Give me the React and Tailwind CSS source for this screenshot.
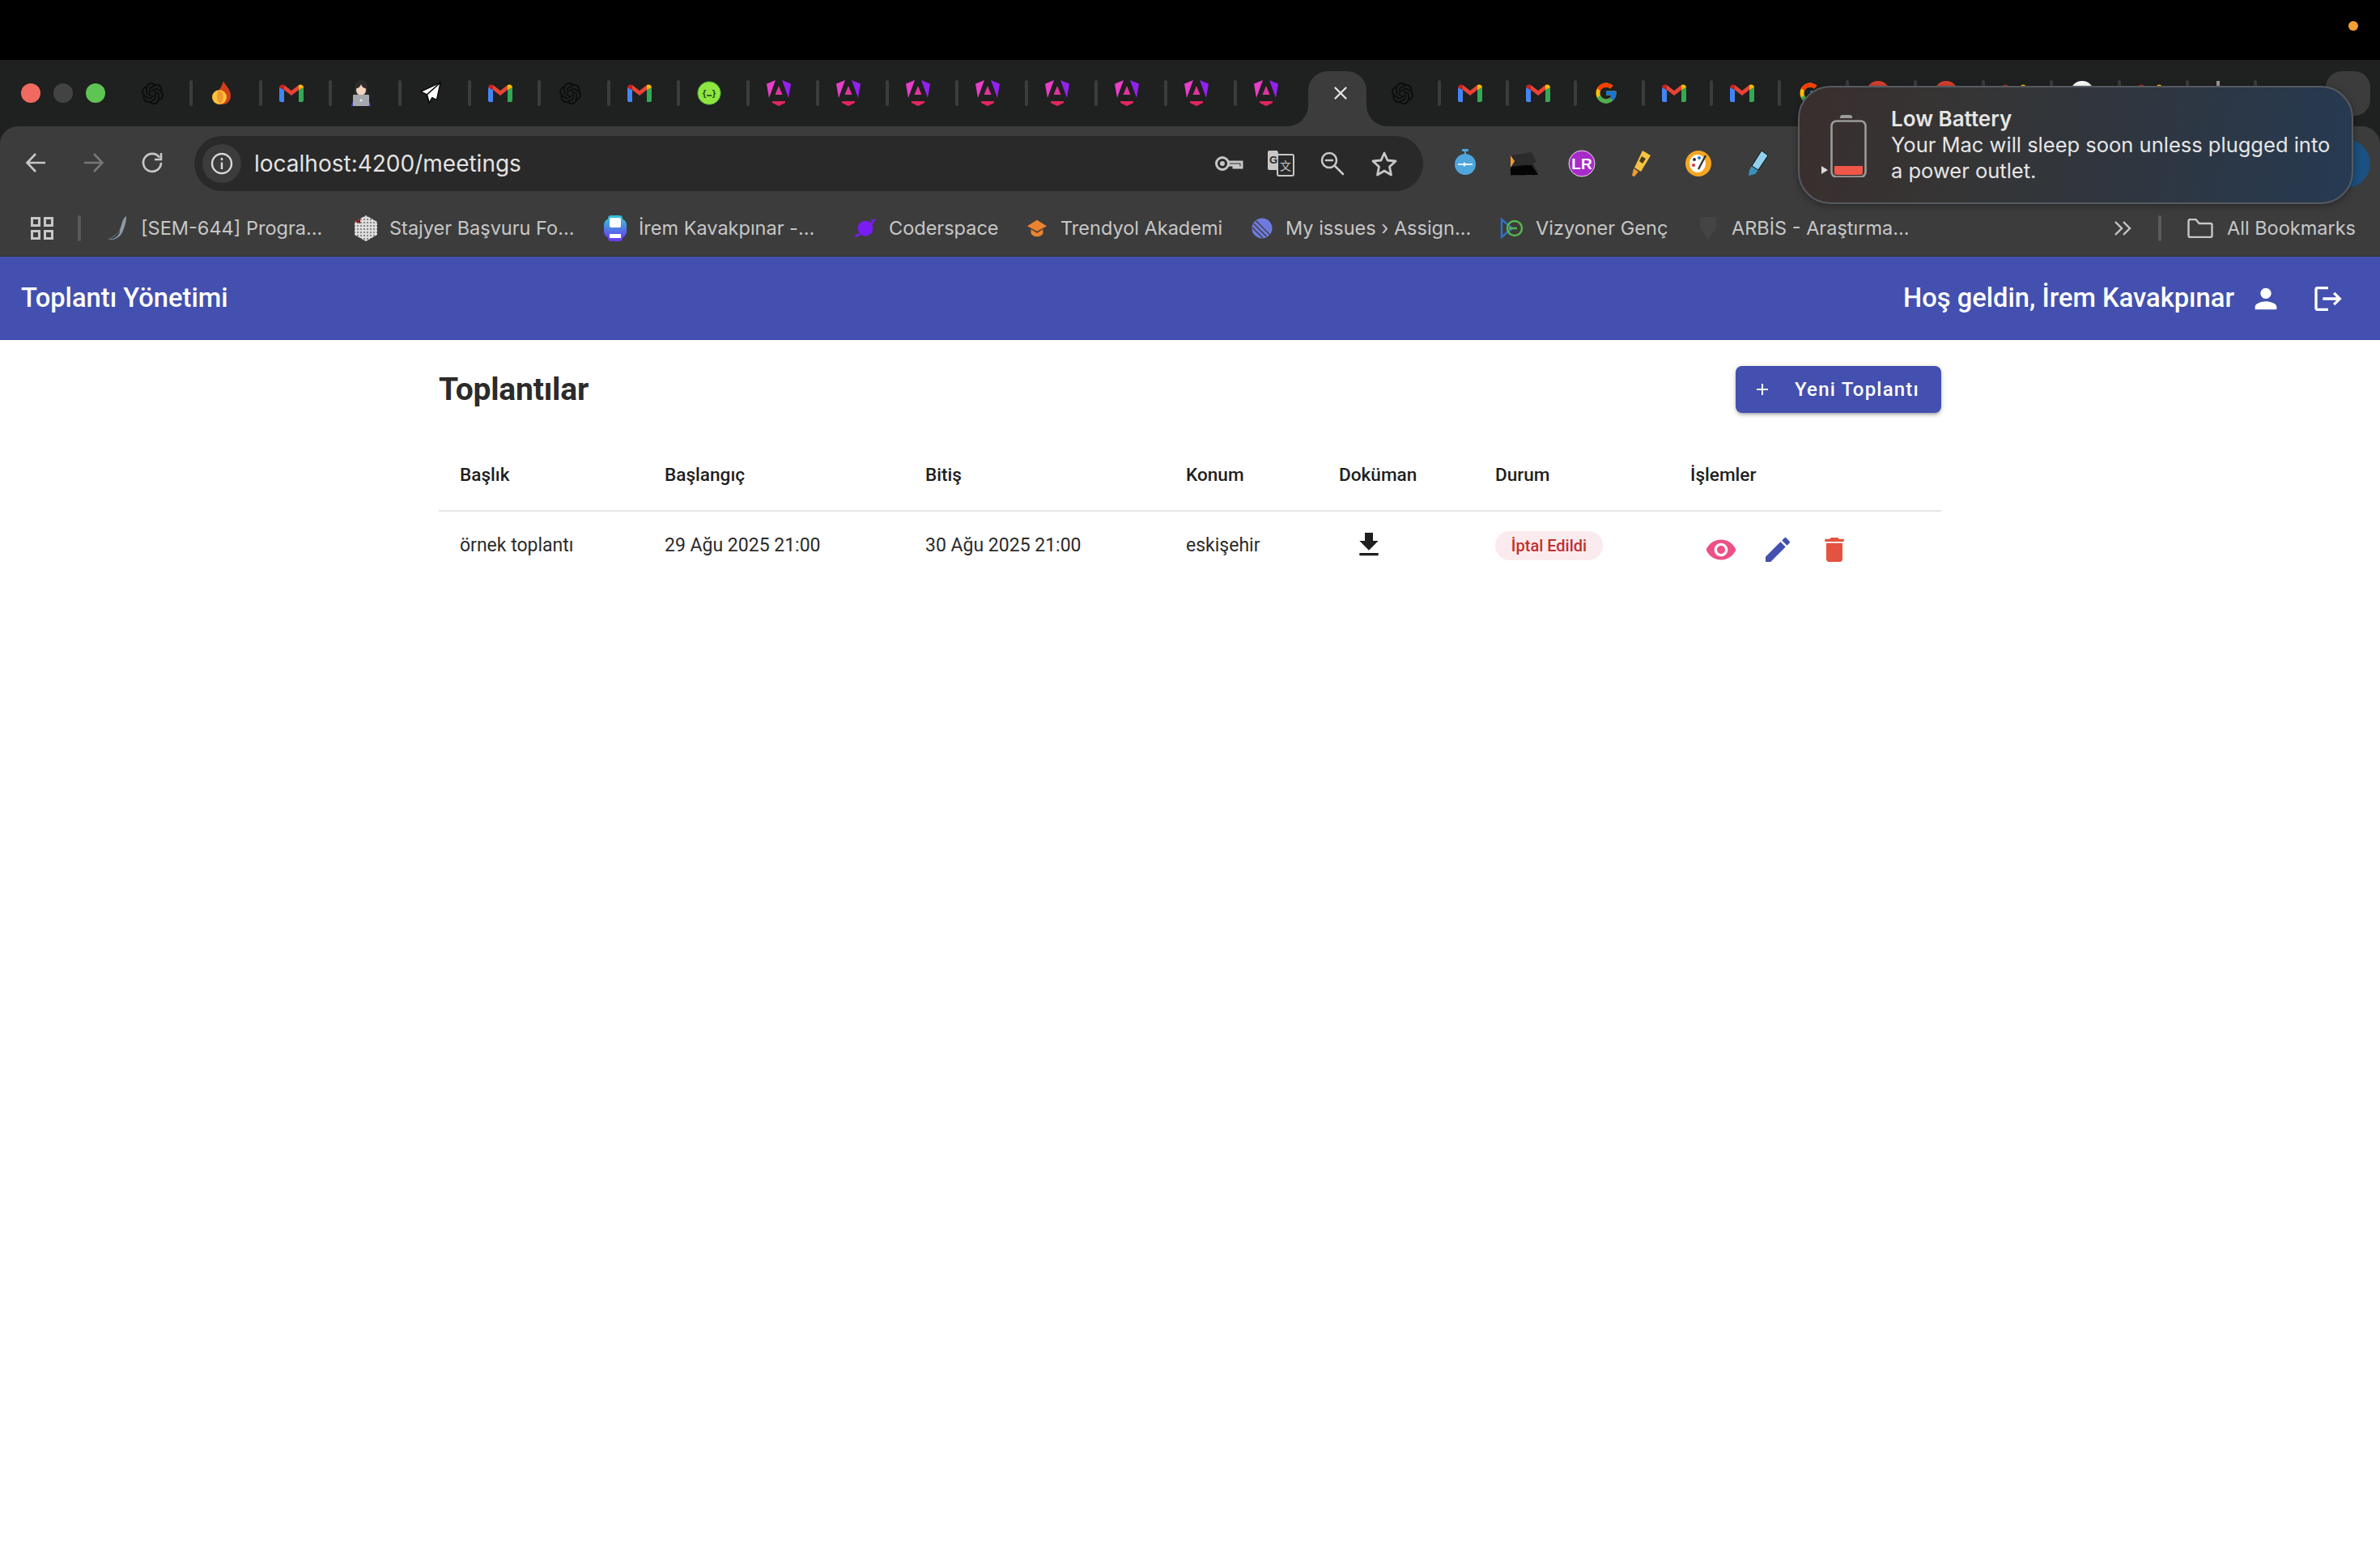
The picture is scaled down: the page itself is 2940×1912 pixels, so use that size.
import { SiOpenai } from "react-icons/si";
import { FcGoogle } from "react-icons/fc";

// material icon paths used by the meetings page
const ICONS = {
  visibility: "M12 4.5C7 4.5 2.73 7.61 1 12c1.73 4.39 6 7.5 11 7.5s9.27-3.11 11-7.5c-1.73-4.39-6-7.5-11-7.5zM12 17c-2.76 0-5-2.24-5-5s2.24-5 5-5 5 2.24 5 5-2.24 5-5 5zm0-8c-1.66 0-3 1.34-3 3s1.34 3 3 3 3-1.34 3-3-1.34-3-3-3z",
  edit: "M3 17.25V21h3.75L17.81 9.94l-3.75-3.75L3 17.25zM20.71 7.04c.39-.39.39-1.02 0-1.41l-2.34-2.34c-.39-.39-1.02-.39-1.41 0l-1.83 1.83 3.75 3.75 1.83-1.83z",
  trash: "M6 19c0 1.1.9 2 2 2h8c1.1 0 2-.9 2-2V7H6v12zM19 4h-3.5l-1-1h-5l-1 1H5v2h14V4z",
  download: "M19 9h-4V3H9v6H5l7 7 7-7zM5 18v2h14v-2H5z",
  person: "M12 12c2.21 0 4-1.79 4-4s-1.79-4-4-4-4 1.79-4 4 1.79 4 4 4zm0 2c-2.67 0-8 1.34-8 4v2h16v-2c0-2.66-5.33-4-8-4z",
  logout: "M17 7l-1.41 1.41L18.17 11H8v2h10.17l-2.58 2.58L17 17l5-5zM4 5h8V3H4c-1.1 0-2 .9-2 2v14c0 1.1.9 2 2 2h8v-2H4V5z",
  add: "M19 13h-6v6h-2v-6H5v-2h6V5h2v6h6v2z",
};

function Mat({ name, className }) {
  return (
    <svg viewBox="0 0 24 24" className={className} fill="currentColor">
      <path d={ICONS[name]} />
    </svg>
  );
}

// --- tab favicons ---
function Gmail() {
  return (
    <svg viewBox="0 0 30 22" className="w-[30px] h-[22px]">
      <path d="M0 4v16a2 2 0 0 0 2 2h4V7z" fill="#4285f4" />
      <path d="M30 4v16a2 2 0 0 1-2 2h-4V7z" fill="#34a853" />
      <path d="M6 7v-6l9 7 9-7v6l-9 7z" fill="#ea4335" />
      <path d="M0 4a4 4 0 0 1 6-3v6z" fill="#c5221f" />
      <path d="M30 4a4 4 0 0 0-6-3v6z" fill="#fbbc04" />
    </svg>
  );
}

function Angular() {
  return (
    <svg viewBox="0 0 30 32" className="w-[30px] h-[32px]">
      <path d="M11 0 0 4.5 3 22z" fill="#e83fc8" />
      <path d="M19 0 30 4.5 27 22z" fill="#9420ee" />
      <path d="M15 7 19.5 18h-9z" fill="#e0359b" />
      <path d="M7 26h16v2l-8 4-8-4z" fill="#e2265f" />
    </svg>
  );
}

function Gpt() {
  return <SiOpenai className="w-[27px] h-[27px] text-[#0b0b0b]" />;
}

function Flame() {
  return (
    <svg viewBox="0 0 24 30" className="w-[24px] h-[30px]">
      <path d="M14 0c2 5 9 10 9 18a10 10 0 0 1-20 2C6 14 12 8 14 0z" fill="#cf3f1c" />
      <circle cx="9" cy="20" r="9" fill="#f8c23c" />
      <path d="M9 11c3 2 5 5 5 9s-2 7-4 8c-3-2-4-5-4-9s1-6 3-8z" fill="#ef9a2e" />
    </svg>
  );
}

function Girl() {
  return (
    <svg viewBox="0 0 30 32" className="w-[30px] h-[32px]">
      <path d="M15 0c6 0 8 5 8 11v9H7v-9C7 5 9 0 15 0z" fill="#2b2b2b" />
      <ellipse cx="15" cy="12" rx="6" ry="7" fill="#f3d3c0" />
      <path d="M9 10c3 0 5-2 6-5 1 3 3 5 6 5V6l-6-3-6 3z" fill="#2b2b2b" />
      <path d="M3 32c0-6 5-9 12-9s12 3 12 9z" fill="#3a46b8" />
      <rect x="5" y="18" width="20" height="14" rx="1" fill="#a5a8ad" />
      <circle cx="15" cy="25" r="1.4" fill="#eee" />
    </svg>
  );
}

function Plane() {
  return (
    <svg viewBox="0 0 30 32" className="w-[28px] h-[30px]">
      <path d="M28 2 2 14l8 4 3 11 4-7 6 3z" fill="#fff" stroke="#0a0a0a" strokeWidth="1.6" strokeLinejoin="round" />
      <path d="M28 2 10 18l3 11" fill="none" stroke="#0a0a0a" strokeWidth="1.6" />
    </svg>
  );
}

function Swagger() {
  return (
    <svg viewBox="0 0 30 30" className="w-[30px] h-[30px]">
      <circle cx="15" cy="15" r="14.5" fill="#8ee63f" stroke="#1f5f33" />
      <text x="15" y="19" textAnchor="middle" fontSize="10" fontWeight="700" fill="#173d22" fontFamily="'DejaVu Sans Mono', monospace">{"{…}"}</text>
    </svg>
  );
}

function RedDisc() {
  return <div className="w-[30px] h-[30px] rounded-full bg-[#d9402f]" />;
}

function WhiteDisc() {
  return <div className="w-[30px] h-[30px] rounded-full bg-white" />;
}

function Tip() {
  return <div className="w-[4px] h-[30px] bg-[#9a9a9a]" />;
}

function FcG() {
  return <FcGoogle className="w-[32px] h-[32px]" />;
}

const LEFT_TABS = [Gpt, Flame, Gmail, Girl, Plane, Gmail, Gpt, Gmail, Swagger, Angular, Angular, Angular, Angular, Angular, Angular, Angular];
const RIGHT_TABS = [Gpt, Gmail, Gmail, FcG, Gmail, Gmail, FcG, RedDisc, RedDisc, Gmail, WhiteDisc, Gmail, Tip];

function Fav({ icon: Icon }) {
  return (
    <div className="w-[30px] h-[32px] flex items-center justify-center shrink-0">
      <Icon />
    </div>
  );
}

function TabStrip() {
  return (
    <div className="h-[82px] flex items-center pl-[26px] pr-[12px]">
      <div className="w-[24px] h-[24px] rounded-full bg-[#f16a60]" />
      <div className="w-[24px] h-[24px] rounded-full bg-[#434343] ml-[16px]" />
      <div className="w-[24px] h-[24px] rounded-full bg-[#5ec454] ml-[16px] mr-[43px]" />

      {LEFT_TABS.map((Icon, i) => (
        <div key={i} className="flex items-center">
          <Fav icon={Icon} />
          <div className="w-[4px] h-[32px] rounded-sm bg-[#3b3c3c] ml-[31px] mr-[21px]" />
        </div>
      ))}
      <Fav icon={Angular} />

      <div className="relative self-end ml-[37px] mr-[29px] w-[72px] h-[68px] rounded-t-[24px] bg-[#3c3c3c] flex items-center justify-center pb-[14px] pl-[8px] shrink-0">
        <div className="absolute bottom-0 -left-[26px] w-[26px] h-[26px] bg-[#3c3c3c]">
          <div className="w-full h-full rounded-br-[26px] bg-[#1f2020]" />
        </div>
        <div className="absolute bottom-0 -right-[26px] w-[26px] h-[26px] bg-[#3c3c3c]">
          <div className="w-full h-full rounded-bl-[26px] bg-[#1f2020]" />
        </div>
        <svg viewBox="0 0 16 16" className="w-[16px] h-[16px]" stroke="#e8e8e8" strokeWidth="2.2" strokeLinecap="round">
          <path d="M1.5 1.5l13 13M14.5 1.5l-13 13" />
        </svg>
      </div>

      {RIGHT_TABS.map((Icon, i) => (
        <div key={i} className="flex items-center">
          <Fav icon={Icon} />
          <div className="w-[4px] h-[32px] rounded-sm bg-[#3b3c3c] ml-[29px] mr-[21px]" />
        </div>
      ))}

      <div className="ml-auto w-[55px] h-[55px] rounded-[20px] bg-[#3c3c3c] self-center" />
    </div>
  );
}

// --- omnibox row ---
function AddressIcons() {
  return (
    <div className="flex items-center ml-auto pr-[16px] text-[#c7c7c7]">
      <div className="w-[64px] flex justify-center">
        <svg viewBox="0 0 36 24" className="w-[36px] h-[24px]" fill="none" stroke="currentColor" strokeWidth="3">
          <circle cx="10" cy="12" r="7.5" />
          <circle cx="10" cy="12" r="3" fill="currentColor" stroke="none" />
          <path d="M17 10h17v7h-4v-3h-3v3h-3v-3h-7" />
        </svg>
      </div>
      <div className="w-[64px] flex justify-center">
        <svg viewBox="0 0 34 34" className="w-[34px] h-[34px]">
          <path d="M1 3a2 2 0 0 1 2-2h10l8 24H3a2 2 0 0 1-2-2z" fill="#c7c7c7" />
          <rect x="13" y="6" width="20" height="26" rx="2" fill="#2a2a2a" stroke="#c7c7c7" strokeWidth="2" />
          <text x="8" y="17" textAnchor="middle" fontSize="13" fontWeight="700" fill="#2a2a2a" fontFamily="'Liberation Sans', sans-serif">G</text>
          <text x="23" y="25" textAnchor="middle" fontSize="14" fill="#c7c7c7" fontFamily="'Noto Sans CJK SC', sans-serif">文</text>
        </svg>
      </div>
      <div className="w-[64px] flex justify-center">
        <svg viewBox="0 0 30 30" className="w-[30px] h-[30px]" fill="none" stroke="currentColor" strokeWidth="2.6" strokeLinecap="round">
          <circle cx="11" cy="11" r="9" />
          <path d="M7 11h8M18 18l10 10" />
        </svg>
      </div>
      <div className="w-[64px] flex justify-center">
        <svg viewBox="0 0 32 32" className="w-[32px] h-[32px]" fill="none" stroke="currentColor" strokeWidth="2.8" strokeLinejoin="round">
          <path d="M16 3l4 9 10 1-7.500 7 2 10-8.500-5-8.500 5 2-10L2 13l10-1z" />
        </svg>
      </div>
    </div>
  );
}

function Extensions() {
  return (
    <div className="flex items-center h-[68px] ml-[28px] gap-[24px]">
      <svg viewBox="0 0 48 48" className="w-[48px] h-[48px]">
        <rect x="20" y="6" width="8" height="3" rx="1" fill="#4ea6dc" />
        <rect x="23" y="8" width="2" height="5" fill="#4ea6dc" />
        <circle cx="24" cy="25" r="13" fill="#4ea6dc" />
        <path d="M15 25h18" stroke="#fff" strokeWidth="1.6" />
        <path d="M22 22l4 3-4 3z" fill="#fff" />
      </svg>
      <svg viewBox="0 0 48 48" className="w-[48px] h-[48px]">
        <path d="M8 14l26-4 6 12-4 2 6 12-6 3-5-7-4 7H8z" fill="#2b2b2b" />
        <path d="M8 28 26 26 34 26 42 38 8 38z" fill="#050505" />
        <path d="M8 14l5 7-5 8z" fill="#f59a35" />
      </svg>
      <svg viewBox="0 0 48 48" className="w-[48px] h-[48px]">
        <circle cx="24" cy="24" r="16" fill="#a82bc9" stroke="#e6dcea" strokeWidth="1" />
        <text x="24" y="31" textAnchor="middle" fontSize="19" fontWeight="700" fill="#fff" fontFamily="'Liberation Sans', sans-serif">LR</text>
      </svg>
      <svg viewBox="0 0 48 48" className="w-[48px] h-[48px]">
        <path d="M27 8l10 6-12 20-8-5z" fill="#f5c344" />
        <path d="M26 15l5 3-4 6-4-3z" fill="#4a3d16" />
        <path d="M16 30l6 4-5 6-3-1z" fill="#ee9c32" />
      </svg>
      <svg viewBox="0 0 48 48" className="w-[48px] h-[48px]">
        <circle cx="24" cy="24" r="16" fill="#f5a623" />
        <ellipse cx="23" cy="24" rx="10" ry="11" fill="#fff" />
        <circle cx="19" cy="19" r="2" fill="#333" />
        <circle cx="25" cy="17" r="2" fill="#2f6fd0" />
        <circle cx="18" cy="26" r="2" fill="#d33" />
        <path d="M33 14 24 31" stroke="#333" strokeWidth="2.400" />
      </svg>
      <svg viewBox="0 0 48 48" className="w-[48px] h-[48px]">
        <path d="M30 8l8 6-12 18-8-5z" fill="#8fd0ee" />
        <path d="M18 27l8 5-4 5-8 2 1-7z" fill="#3b8fb8" />
        <path d="M30 8l8 6-12 18-8-5z" fill="none" stroke="#0d0d0d" strokeWidth="1" />
      </svg>
    </div>
  );
}

function Toolbar() {
  return (
    <div className="h-[80px] flex items-start pt-[12px] pl-[31px] pr-[12px] text-[#c7c7c7]">
      <div className="flex items-center h-[68px] mt-[-1px]">
        <svg viewBox="0 0 26 26" className="w-[26px] h-[26px]" fill="none" stroke="currentColor" strokeWidth="2.600">
          <path d="M25 13H3M13 2 2.500 13 13 24" />
        </svg>
        <svg viewBox="0 0 26 26" className="w-[26px] h-[26px] ml-[46px] text-[#777]" fill="none" stroke="currentColor" strokeWidth="2.600">
          <path d="M1 13h22M13 2l10.500 11L13 24" />
        </svg>
        <svg viewBox="0 0 28 28" className="w-[28px] h-[28px] ml-[45px]" fill="none" stroke="currentColor" strokeWidth="2.600">
          <path d="M23 7.500A11 11 0 1 0 25 14" />
          <path d="M25 2v8h-8" />
        </svg>
      </div>
      <div className="w-[1518px] h-[68px] rounded-full bg-[#292929] ml-[38px] flex items-center pl-[10px] shrink-0">
        <div className="w-[48px] h-[48px] rounded-full bg-[#3c3c3c] flex items-center justify-center">
          <svg viewBox="0 0 28 28" className="w-[28px] h-[28px]" fill="none" stroke="#d8d8d8" strokeWidth="2.400">
            <circle cx="14" cy="14" r="12" />
            <path d="M14 12.500V21M14 7v3" />
          </svg>
        </div>
        <span className="ml-[16px] text-[28px] leading-none text-[#e3e3e3] [font-family:Inter,sans-serif]">localhost:4200/meetings</span>
        <AddressIcons />
      </div>
      <Extensions />
      <div className="ml-auto mt-[4px] w-[60px] h-[60px] rounded-full bg-[#1b5080]" />
    </div>
  );
}

// --- bookmarks ---
function Quill() {
  return (
    <svg viewBox="0 0 26 30" className="w-[26px] h-[30px]">
      <path d="M24 0c-4 2-5 8-7 14S10 25 1 28c8 3 16-2 19-10S24 6 24 0z" fill="#8d99a3" />
      <path d="M1 28c6-1 12-5 15-11 1 5-6 13-15 11z" fill="#2d3a44" />
    </svg>
  );
}

function Cube() {
  return (
    <svg viewBox="0 0 30 32" className="w-[30px] h-[32px]">
      <defs>
        <pattern id="cubedots" width="4" height="4" patternUnits="userSpaceOnUse">
          <rect width="4" height="4" fill="#ddd" />
          <rect width="2" height="2" fill="#888" />
        </pattern>
      </defs>
      <path d="M15 0l14 8v16l-14 8-14-8V8z" fill="url(#cubedots)" />
      <path d="M1 8l7-4v6z" fill="#8b1c1c" />
    </svg>
  );
}

function Watch() {
  return (
    <svg viewBox="0 0 30 32" className="w-[30px] h-[32px]">
      <defs>
        <linearGradient id="watchg" x1="0" y1="0" x2="0" y2="1">
          <stop offset="0" stopColor="#35c3d8" />
          <stop offset="1" stopColor="#6a3bf0" />
        </linearGradient>
      </defs>
      <rect x="1" y="4" width="28" height="24" rx="8" fill="url(#watchg)" />
      <rect x="6" y="0" width="18" height="32" rx="4" fill="url(#watchg)" />
      <rect x="8" y="3" width="14" height="12" rx="2" fill="#fff" />
      <rect x="8" y="23" width="14" height="5" fill="#fff" />
    </svg>
  );
}

function Planet() {
  return (
    <svg viewBox="0 0 32 28" className="w-[30px] h-[28px]">
      <circle cx="16" cy="14" r="10" fill="#7a1cf5" />
      <path d="M2 26C6 26 14 20 20 14s10-11 10-12-6 1-8 2c4 0 2 4-4 10S6 24 6 20c-2 2-5 6-4 6z" fill="#7a1cf5" />
    </svg>
  );
}

function Cap() {
  return (
    <svg viewBox="0 0 28 28" className="w-[26px] h-[26px]">
      <path d="M14 3 27 11 14 18 1 11z" fill="#ea8430" />
      <path d="M6 15l8 5 8-5v6c-2 3-5 4-8 4s-6-1-8-4z" fill="#ea8430" />
      <path d="M6 15l8 5 8-5" fill="none" stroke="#7a4a20" strokeWidth="1" />
    </svg>
  );
}

function Linear() {
  return (
    <svg viewBox="0 0 28 28" className="w-[26px] h-[26px]">
      <circle cx="14" cy="14" r="13.500" fill="#6f7ade" />
      <path d="M1 13 15 27M3 8 20 25M6 4l19 19" stroke="#3c3c3c" strokeWidth="1.400" />
    </svg>
  );
}

function Vizyoner() {
  return (
    <svg viewBox="0 0 30 28" className="w-[30px] h-[28px]" fill="none" strokeWidth="2.400">
      <path d="M2 3v22l13-11z" stroke="#2f72c9" />
      <circle cx="18" cy="14" r="9" stroke="#56b84c" />
      <path d="M11 14h10" stroke="#56b84c" />
    </svg>
  );
}

function Arbis() {
  return (
    <svg viewBox="0 0 28 32" className="w-[28px] h-[32px]">
      <path d="M4 2h20v14L14 30 4 16z" fill="#444" />
    </svg>
  );
}

const BOOKMARKS = [
  { icon: Quill, label: "[SEM-644] Progra...", wrap: "w-[307px]" },
  { icon: Cube, label: "Stajyer Başvuru Fo...", wrap: "w-[308px]" },
  { icon: Watch, label: "İrem Kavakpınar -...", wrap: "w-[309px]" },
  { icon: Planet, label: "Coderspace", wrap: "w-[212px]" },
  { icon: Cap, label: "Trendyol Akademi", wrap: "w-[278px]" },
  { icon: Linear, label: "My issues › Assign...", wrap: "w-[309px]" },
  { icon: Vizyoner, label: "Vizyoner Genç", wrap: "w-[242px]" },
  { icon: Arbis, label: "ARBİS - Araştırma...", wrap: "w-[516px]" },
];

function Bookmarks() {
  return (
    <div className="h-[81px] pt-[12px] flex items-center pl-[38px] border-b border-[#333] text-[#c7c7c7] text-[23.5px] [font-family:Inter,sans-serif]">
      <div className="grid grid-cols-2 gap-[4px] mr-[30px]">
        <div className="w-[12px] h-[12px] border-[3px] border-[#c7c7c7]" />
        <div className="w-[12px] h-[12px] border-[3px] border-[#c7c7c7]" />
        <div className="w-[12px] h-[12px] border-[3px] border-[#c7c7c7]" />
        <div className="w-[12px] h-[12px] border-[3px] border-[#c7c7c7]" />
      </div>
      <div className="w-[4px] h-[32px] rounded-sm bg-[#5a5a5a] mr-[30px]" />
      {BOOKMARKS.map((b) => (
        <div key={b.label} className={`flex items-center gap-[14px] shrink-0 ${b.wrap}`}>
          <div className="w-[30px] flex justify-center">
            <b.icon />
          </div>
          <span className="whitespace-nowrap">{b.label}</span>
        </div>
      ))}
      <svg viewBox="0 0 22 20" className="w-[22px] h-[20px]" fill="none" stroke="currentColor" strokeWidth="2.400">
        <path d="M2 2l8 8-8 8M12 2l8 8-8 8" />
      </svg>
      <div className="w-[4px] h-[32px] rounded-sm bg-[#5a5a5a] ml-[33px] mr-[32px]" />
      <svg viewBox="0 0 32 24" className="w-[32px] h-[24px]" fill="none" stroke="currentColor" strokeWidth="2.400" strokeLinejoin="round">
        <path d="M1.500 3a2 2 0 0 1 2-2h7l4 5h14a2 2 0 0 1 2 2v13a2 2 0 0 1-2 2h-25a2 2 0 0 1-2-2z" />
      </svg>
      <span className="ml-[17px] whitespace-nowrap">All Bookmarks</span>
    </div>
  );
}

function LowBattery() {
  return (
    <div className="absolute top-[106px] left-[2221px] w-[686px] h-[146px] rounded-[40px] border-2 border-[#555a60] bg-[linear-gradient(100deg,#3a2e2e_0%,#353535_30%,#2f3640_62%,#263a52_100%)] flex [font-family:Inter,sans-serif] shadow-[0_2px_10px_rgba(0,0,0,0.35)]">
      <svg viewBox="0 0 60 80" className="absolute left-[25px] top-[31px] w-[60px] h-[80px]">
        <path d="M25 7a3 3 0 0 1 3-4h9a3 3 0 0 1 3 4z" fill="#9a9a9a" />
        <rect x="14.500" y="10.500" width="42" height="69" rx="6" fill="none" stroke="#9a9a9a" strokeWidth="2.600" />
        <path d="M18 66h35v8a3 3 0 0 1-3 3H21a3 3 0 0 1-3-3z" fill="#f0564a" />
        <path d="M2 66l8 5-8 5z" fill="#d8d8d8" />
      </svg>
      <div className="pl-[113px] pt-[23px] text-[25.5px] leading-[32px] text-[#e6e6e6] whitespace-nowrap">
        <div className="font-semibold text-[26px]">Low Battery</div>
        <div>Your Mac will sleep soon unless plugged into</div>
        <div>a power outlet.</div>
      </div>
    </div>
  );
}

// --- the app itself ---
function AppBar() {
  return (
    <header className="h-[103px] bg-[#4350af] text-white flex items-center pl-[26px] pr-[44px] font-medium text-[32.7px]">
      <span>Toplantı Yönetimi</span>
      <span className="ml-auto">Hoş geldin, İrem Kavakpınar</span>
      <Mat name="person" className="w-[40px] h-[40px] ml-[19px]" />
      <Mat name="logout" className="w-[40px] h-[40px] ml-[37px]" />
    </header>
  );
}

const COLS = "grid grid-cols-[253px_322px_322px_189px_193px_241px_336px]";

function Meetings() {
  return (
    <main className="w-[1856px] mx-auto pt-[32px]">
      <div className="flex items-center justify-between h-[58px]">
        <h1 className="text-[39px] font-bold text-[#2b2b2b] tracking-[-0.2px] mt-[1px]">Toplantılar</h1>
        <button className="w-[254px] h-[58px] rounded-[8px] bg-[#4350af] text-white flex items-center pl-[21px] font-medium text-[24px] tracking-[1.2px] shadow-[0_3px_3px_-2px_rgba(0,0,0,0.2),0_3px_4px_rgba(0,0,0,0.14),0_1px_8px_rgba(0,0,0,0.12)]">
          <Mat name="add" className="w-[24px] h-[24px] mr-[28px]" />
          <span>Yeni Toplantı</span>
        </button>
      </div>

      <div className={`${COLS} mt-[33px] h-[89px] items-center border-b-2 border-[#e5e5e5] text-[22.6px] font-medium text-[#1f1f1f]`}>
        <div className="pl-[26px]">Başlık</div>
        <div className="pl-[26px]">Başlangıç</div>
        <div className="pl-[26px]">Bitiş</div>
        <div className="pl-[26px]">Konum</div>
        <div className="pl-[26px]">Doküman</div>
        <div className="pl-[26px]">Durum</div>
        <div className="pl-[26px]">İşlemler</div>
      </div>

      <div className={`${COLS} h-[84px] items-center text-[23px] text-[#2b2b2b]`}>
        <div className="pl-[26px]">örnek toplantı</div>
        <div className="pl-[26px]">29 Ağu 2025 21:00</div>
        <div className="pl-[26px]">30 Ağu 2025 21:00</div>
        <div className="pl-[26px]">eskişehir</div>
        <div className="pl-[43px]">
          <Mat name="download" className="w-[40px] h-[40px] text-[#1f1f1f] mb-[2px]" />
        </div>
        <div className="pl-[26px]">
          <span className="inline-flex w-[133px] h-[36px] items-center justify-center rounded-full bg-[#fcebee] text-[#c0312f] text-[20px] font-medium">İptal Edildi</span>
        </div>
        <div className="pl-[44px] flex items-center gap-[30px] mt-[10px]">
          <Mat name="visibility" className="w-[40px] h-[40px] text-[#ee4f84]" />
          <Mat name="edit" className="w-[40px] h-[40px] text-[#4350af]" />
          <Mat name="trash" className="w-[40px] h-[40px] text-[#e4533f]" />
        </div>
      </div>
    </main>
  );
}

export default function App() {
  return (
    <div className="relative w-[2940px] min-h-[1912px] bg-white overflow-hidden [font-family:Roboto,sans-serif]">
      <div className="h-[74px] bg-black flex justify-end pt-[26px] pr-[27px]">
        <div className="w-[12px] h-[12px] rounded-full bg-[#f5a033]" />
      </div>
      <div className="bg-[#1f2020]">
        <TabStrip />
        <div className="bg-[#3c3c3c] rounded-t-[22px]">
          <Toolbar />
          <Bookmarks />
        </div>
      </div>
      <AppBar />
      <Meetings />
      <LowBattery />
    </div>
  );
}
